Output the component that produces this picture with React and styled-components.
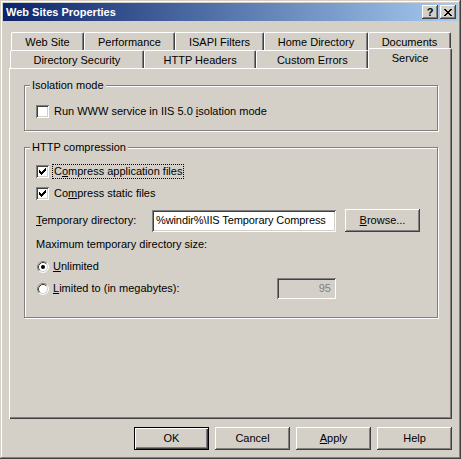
import React from 'react';
import styled, { createGlobalStyle } from 'styled-components';

const Global = createGlobalStyle`
  html, body { margin: 0; padding: 0; background: #d4d0c8; }
  body { font-family: "Liberation Sans", Arial, sans-serif; font-size: 11px; color: #000; }
  * { box-sizing: border-box; }
`;

const Window = styled.div`
  width: 461px;
  height: 459px;
  padding: 3px;
  background: #d4d0c8;
  box-shadow: inset -1px -1px #404040, inset 1px 1px #d4d0c8, inset -2px -2px #808080, inset 2px 2px #fff;
  display: flex;
  flex-direction: column;
`;

const TitleBar = styled.div`
  height: 18px;
  flex: none;
  display: flex;
  align-items: center;
  gap: 2px;
  padding: 0 2px 0 3px;
  background: linear-gradient(to right, #0a246a, #a6caf0);
`;

const TitleText = styled.div`
  flex: 1;
  color: #fff;
  font-weight: bold;
  font-size: 11px;
  line-height: 13px;
`;

const TitleButton = styled.div`
  width: 16px;
  height: 14px;
  background: #d4d0c8;
  box-shadow: inset -1px -1px #404040, inset 1px 1px #fff, inset -2px -2px #808080;
  display: flex;
  align-items: center;
  justify-content: center;
  font-weight: bold;
  font-size: 11px;
  line-height: 11px;
  color: #000;
`;

const Body = styled.div`
  flex: 1;
  display: flex;
  flex-direction: column;
  padding: 11px 6px 6px;
`;

const TabRow = styled.div`
  display: flex;
  align-items: flex-end;
  height: 18px;
  padding-left: ${p => p.$indent}px;
`;

const Tab = styled.div`
  width: ${p => p.$w}px;
  height: ${p => (p.$active ? 21 : 18)}px;
  margin-bottom: ${p => (p.$active ? -1 : 0)}px;
  position: ${p => (p.$active ? 'relative' : 'static')};
  z-index: ${p => (p.$active ? 1 : 'auto')};
  background: #d4d0c8;
  border-top: 1px solid #fff;
  border-left: 1px solid #fff;
  border-right: 1px solid #404040;
  box-shadow: inset -1px 0 #808080;
  border-radius: 2px 2px 0 0;
  display: flex;
  justify-content: center;
  padding-top: 3px;
  line-height: 13px;
  white-space: nowrap;
`;

const Panel = styled.div`
  height: 351px;
  flex: none;
  box-shadow: inset 1px 1px #fff, inset -1px -1px #404040, inset -2px -2px #808080;
  padding: 11px 14px 0 15px;
  display: flex;
  flex-direction: column;
`;

const Group = styled.fieldset`
  margin: ${p => p.$top || 0}px 0 0 0;
  padding: 0;
  min-width: 0;
  border: 1px solid #808080;
  box-shadow: inset 1px 1px #fff, 1px 1px #fff;
`;

const Legend = styled.legend`
  margin-left: 5px;
  padding: 0 2px;
  line-height: 13px;
  background: #d4d0c8;
`;

const GroupBody = styled.div`
  padding: ${p => p.$pad};
  display: flex;
  flex-direction: column;
`;

const Row = styled.div`
  display: flex;
  align-items: center;
  height: ${p => p.$h || 13}px;
  margin-top: ${p => p.$mt || 0}px;
  white-space: nowrap;
  line-height: 13px;
`;

const Box = styled.span`
  width: 13px;
  height: 13px;
  flex: none;
  background: #fff;
  box-shadow: inset 1px 1px #808080, inset -1px -1px #fff, inset 2px 2px #404040, inset -2px -2px #d4d0c8;
  display: block;
`;

const Caption = styled.span`
  margin-left: ${p => (p.$focus ? 3 : p.$ml ?? 5)}px;
  padding: 0 ${p => (p.$focus ? 1 : 0)}px;
  border: ${p => (p.$focus ? '1px dotted #000' : 'none')};
  width: ${p => (p.$w ? `${p.$w}px` : 'auto')};
  flex: none;
  line-height: 13px;
`;

const FieldLabel = styled.span`
  width: ${p => p.$w}px;
  flex: none;
`;

const TextField = styled.div`
  width: 184px;
  height: 22px;
  flex: none;
  background: #fff;
  box-shadow: inset 1px 1px #808080, inset -1px -1px #fff, inset 2px 2px #404040, inset -2px -2px #d4d0c8;
  padding: 0 3px 0 4px;
  display: flex;
  align-items: center;
  overflow: hidden;
  white-space: nowrap;
  letter-spacing: -0.1px;
`;

const DisabledField = styled.div`
  width: 59px;
  height: 21px;
  flex: none;
  background: #d4d0c8;
  box-shadow: inset 1px 1px #808080, inset -1px -1px #fff, inset 2px 2px #404040, inset -2px -2px #d4d0c8;
  padding-right: 5px;
  display: flex;
  align-items: center;
  justify-content: flex-end;
  color: #808080;
`;

const Button = styled.div`
  width: 75px;
  height: 23px;
  flex: none;
  margin-left: ${p => p.$ml || 0}px;
  background: #d4d0c8;
  box-shadow: ${p =>
    p.$default
      ? 'inset 0 0 0 1px #000, inset 2px 2px #fff, inset -2px -2px #404040, inset -3px -3px #808080'
      : 'inset -1px -1px #404040, inset 1px 1px #fff, inset -2px -2px #808080'};
  display: flex;
  align-items: center;
  justify-content: center;
  line-height: 13px;
`;

const ButtonBar = styled.div`
  display: flex;
  justify-content: flex-end;
  gap: 6px;
  margin-top: 8px;
`;

const Check = ({ checked }) => (
  <Box>
    {checked && (
      <svg width="13" height="13" viewBox="0 0 13 13" shapeRendering="crispEdges">
        <path
          fill="#000"
          d="M3 5h1v3H3z M4 6h1v3H4z M5 7h1v3H5z M6 6h1v3H6z M7 5h1v3H7z M8 4h1v3H8z M9 3h1v3H9z"
        />
      </svg>
    )}
  </Box>
);

const RadioSvg = styled.svg`
  flex: none;
  margin-left: 1px;
  display: block;
`;

const Radio = ({ checked }) => (
  <RadioSvg width="12" height="12" viewBox="0 0 12 12">
    <circle cx="6" cy="6" r="5" fill="#fff" />
    <path d="M2.11 9.89 A5.5 5.5 0 0 1 9.89 2.11" stroke="#808080" fill="none" />
    <path d="M9.89 2.11 A5.5 5.5 0 0 1 2.11 9.89" stroke="#fff" fill="none" />
    <path d="M2.82 9.18 A4.5 4.5 0 0 1 9.18 2.82" stroke="#404040" fill="none" />
    <path d="M9.18 2.82 A4.5 4.5 0 0 1 2.82 9.18" stroke="#d4d0c8" fill="none" />
    {checked && <circle cx="6" cy="6" r="2" fill="#000" />}
  </RadioSvg>
);

const CloseGlyph = () => (
  <svg width="8" height="7" viewBox="0 0 8 7" shapeRendering="crispEdges">
    <path
      fill="#000"
      d="M0 0h2v1H0z M6 0h2v1H6z M1 1h2v1H1z M5 1h2v1H5z M2 2h4v1H2z M3 3h2v1H3z M2 4h4v1H2z M1 5h2v1H1z M5 5h2v1H5z M0 6h2v1H0z M6 6h2v1H6z"
    />
  </svg>
);

const backTabs = [
  ['Web Site', 73],
  ['Performance', 91],
  ['ISAPI Filters', 89],
  ['Home Directory', 104],
  ['Documents', 83],
];

const frontTabs = [
  ['Directory Security', 134],
  ['HTTP Headers', 113],
  ['Custom Errors', 112],
  ['Service', 84, true],
];

export default function App() {
  return (
    <>
      <Global />
      <Window>
        <TitleBar>
          <TitleText>Web Sites Properties</TitleText>
          <TitleButton>?</TitleButton>
          <TitleButton>
            <CloseGlyph />
          </TitleButton>
        </TitleBar>
        <Body>
          <TabRow $indent={2}>
            {backTabs.map(([t, w]) => (
              <Tab key={t} $w={w}>{t}</Tab>
            ))}
          </TabRow>
          <TabRow $indent={1}>
            {frontTabs.map(([t, w, a]) => (
              <Tab key={t} $w={w} $active={a}>{t}</Tab>
            ))}
          </TabRow>
          <Panel>
            <Group>
              <Legend>Isolation mode</Legend>
              <GroupBody $pad="13px 11px 12px">
                <Row>
                  <Check />
                  <Caption>Run WWW service in IIS 5.0 <u>i</u>solation mode</Caption>
                </Row>
              </GroupBody>
            </Group>
            <Group $top={10}>
              <Legend>HTTP compression</Legend>
              <GroupBody $pad="10px 11px 18px">
                <Row $h={15}>
                  <Check checked />
                  <Caption $focus>C<u>o</u>mpress application files</Caption>
                </Row>
                <Row $mt={8}>
                  <Check checked />
                  <Caption>Co<u>m</u>press static files</Caption>
                </Row>
                <Row $h={23} $mt={9}>
                  <FieldLabel $w={116}><u>T</u>emporary directory:</FieldLabel>
                  <TextField>%windir%\IIS Temporary Compress</TextField>
                  <Button $ml={9}><span><u>B</u>rowse...</span></Button>
                </Row>
                <Row $mt={6}>Maximum temporary directory size:</Row>
                <Row $mt={9}>
                  <Radio checked />
                  <Caption $ml={4}><u>U</u>nlimited</Caption>
                </Row>
                <Row $h={21} $mt={5}>
                  <Radio />
                  <Caption $ml={4} $w={224}><u>L</u>imited to (in megabytes):</Caption>
                  <DisabledField>95</DisabledField>
                </Row>
              </GroupBody>
            </Group>
          </Panel>
          <ButtonBar>
            <Button $default>OK</Button>
            <Button>Cancel</Button>
            <Button><span><u>A</u>pply</span></Button>
            <Button>Help</Button>
          </ButtonBar>
        </Body>
      </Window>
    </>
  );
}
